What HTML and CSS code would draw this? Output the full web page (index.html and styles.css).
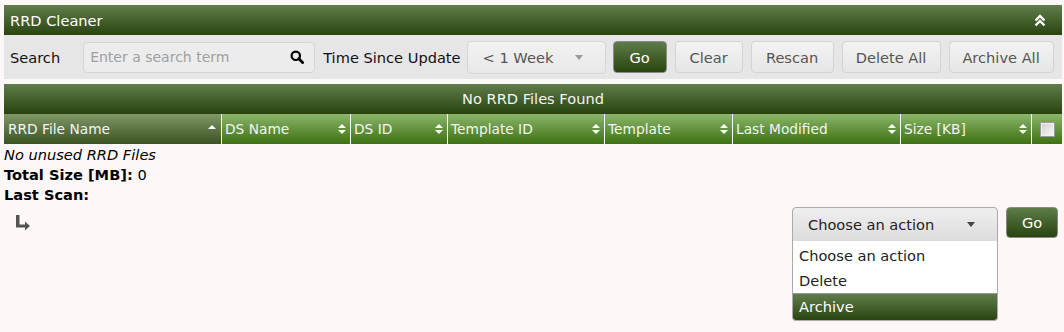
FILE: index.html
```html
<!DOCTYPE html>
<html lang="en">

<head>
  <meta charset="UTF-8">
  <title>RRD Cleaner</title>
  <link rel="stylesheet" href="styles.css">
</head>

<body>

  <div class="panel">
    <div class="panel-title">
      <span>RRD Cleaner</span>
      <svg class="collapse" width="12" height="13" viewBox="0 0 12 13">
        <path d="M1.5 6.5 L6 2 L10.5 6.5 M1.5 11.5 L6 7 L10.5 11.5" fill="none" stroke="#fff" stroke-width="2.4"/>
      </svg>
    </div>
    <div class="filter-row">
      <span class="label">Search</span>
      <div class="search-box">
        <input type="text" placeholder="Enter a search term">
        <svg width="14" height="14" viewBox="0 0 14 14">
          <circle cx="5.8" cy="5.8" r="4.2" fill="none" stroke="#000" stroke-width="2.2"/>
          <path d="M8.8 8.8 L12.6 12.6" stroke="#000" stroke-width="2.8" stroke-linecap="round"/>
        </svg>
      </div>
      <span class="label">Time Since Update</span>
      <div class="select time-select">
        <span>&lt; 1 Week</span>
        <span class="caret"></span>
      </div>
      <button class="btn btn-go">Go</button>
      <button class="btn btn-clear">Clear</button>
      <button class="btn btn-rescan">Rescan</button>
      <button class="btn btn-delete">Delete All</button>
      <button class="btn btn-archive">Archive All</button>
    </div>
  </div>

  <table class="files">
    <caption class="table-title">No RRD Files Found</caption>
    <thead>
      <tr class="columns">
        <th class="sorted col-file">RRD File Name <span class="sort sort-up"></span></th>
        <th class="col-ds">DS Name <span class="sort"></span></th>
        <th class="col-dsid">DS ID <span class="sort"></span></th>
        <th class="col-tid">Template ID <span class="sort"></span></th>
        <th class="col-tpl">Template <span class="sort"></span></th>
        <th class="col-mod">Last Modified <span class="sort"></span></th>
        <th class="col-size">Size [KB] <span class="sort"></span></th>
        <th class="col-check"><span class="checkbox"></span></th>
      </tr>
    </thead>
  </table>

  <div class="summary">
    <div class="empty">No unused RRD Files</div>
    <div><b>Total Size [MB]:</b> 0</div>
    <div><b>Last Scan:</b></div>
  </div>

  <div class="actions">
    <svg class="return-arrow" width="16" height="16" viewBox="0 0 16 16">
      <path d="M1 0 H4.5 V9.5 H10 V6.5 L15 11 L10 15.5 V12.5 H1 Z" fill="#555"/>
    </svg>
    <div class="action-group">
      <div class="action-select">
        <div class="select action-box">
          <span>Choose an action</span>
          <span class="caret dark"></span>
        </div>
        <ul class="menu">
          <li>Choose an action</li>
          <li>Delete</li>
          <li class="active">Archive</li>
        </ul>
      </div>
      <button class="btn btn-go btn-go-action">Go</button>
    </div>
  </div>

</body>

</html>
```

FILE: styles.css
```css
body {
  font-family: "DejaVu Sans", Verdana, sans-serif;
  font-size: 14.6px;
  background-color: #fdf8f7;
  margin: 0;
  padding: 5px 2px 0 4px;
  color: #000;
}

.panel {
  background-color: #e6e6e6;
}

.panel-title {
  height: 30px;
  display: flex;
  align-items: center;
  justify-content: space-between;
  padding: 0 16px 0 6px;
  color: #fff;
  background: linear-gradient(#607e4c, #2a4410);
}

.filter-row {
  height: 44px;
  display: flex;
  align-items: center;
  padding-left: 6px;
}

.label {
  color: #111;
}

.search-box {
  width: 232px;
  height: 31px;
  margin-left: 23px;
  margin-right: 8px;
  display: flex;
  align-items: center;
  justify-content: space-between;
  padding: 0 10px 0 6px;
  box-sizing: border-box;
  background: #ececec;
  border: 1px solid #d6d6d6;
  border-radius: 4px;
}

.search-box input {
  border: none;
  background: transparent;
  font-family: inherit;
  font-size: 14px;
  outline: none;
  width: 180px;
  padding: 0;
}

.search-box input::placeholder {
  color: #a0a0a0;
}

.select {
  display: flex;
  align-items: center;
  justify-content: space-between;
  box-sizing: border-box;
  border: 1px solid #d6d6d6;
  border-radius: 4px;
  color: #555;
}

.time-select {
  width: 139px;
  height: 33px;
  margin-left: 6px;
  padding: 0 22px 0 15px;
  background: linear-gradient(#f2f2f2, #e8e8e8);
}

.caret {
  width: 0;
  height: 0;
  border-left: 4.5px solid transparent;
  border-right: 4.5px solid transparent;
  border-top: 5px solid #999;
}

.caret.dark {
  border-top-color: #444;
}

.btn {
  height: 32px;
  box-sizing: border-box;
  margin-left: 8px;
  padding: 0;
  font-family: inherit;
  font-size: 14.6px;
  color: #555;
  background: linear-gradient(#f3f3f3, #e6e6e6);
  border: 1px solid #d3d3d3;
  border-radius: 4px;
}

.btn-go {
  width: 54px;
  margin-left: 7px;
  color: #fff;
  background: linear-gradient(#5d7c48, #29440f);
  border-color: #8a8a8a;
}

.btn-clear {
  width: 68px;
}

.btn-rescan {
  width: 83px;
}

.btn-delete {
  width: 99px;
}

.btn-archive {
  width: 105px;
}

.files {
  width: 1058px;
  margin-top: 5px;
  border-collapse: separate;
  border-spacing: 0;
  table-layout: fixed;
}

.table-title {
  height: 30px;
  line-height: 30px;
  text-align: center;
  color: #f4f4f4;
  background: linear-gradient(#5f7d4b, #28420e);
}

.columns th {
  position: relative;
  box-sizing: border-box;
  height: 30px;
  padding: 0 0 0 3px;
  text-align: left;
  font-size: 13.75px;
  font-weight: normal;
  color: #f4f4f4;
  border-left: 1px solid #fff;
  background: linear-gradient(#8ab66a, #3d7112);
}

.columns th.sorted {
  border-left: none;
  padding-left: 4px;
  background: linear-gradient(#809766, #3a5322);
}

.col-file { width: 217px; }
.col-ds { width: 129px; }
.col-dsid { width: 97px; }
.col-tid { width: 157px; }
.col-tpl { width: 128px; }
.col-mod { width: 168px; }
.col-size { width: 131px; }
.col-check { width: 31px; }

.sort {
  position: absolute;
  right: 4px;
  top: 10px;
  width: 0;
  height: 0;
  border-left: 4.5px solid transparent;
  border-right: 4.5px solid transparent;
  border-bottom: 4.5px solid #fff;
}

.sort::after {
  content: "";
  position: absolute;
  left: -4.5px;
  top: 6px;
  border-left: 4.5px solid transparent;
  border-right: 4.5px solid transparent;
  border-top: 4.5px solid #fff;
}

.sort-up {
  top: 11px;
  right: 5px;
}

.sort-up::after {
  display: none;
}

.checkbox {
  display: block;
  width: 13px;
  height: 13px;
  margin-left: 5px;
  border: 1px solid #9a9a9a;
  box-shadow: inset 0 0 0 1px #f0f0f0;
  background: linear-gradient(135deg, #cfcfcf, #fafafa);
}

.summary {
  line-height: 20px;
  margin-top: 1px;
}

.empty {
  font-style: italic;
}

.actions {
  display: flex;
  justify-content: space-between;
  align-items: flex-start;
  margin-top: 2px;
}

.return-arrow {
  margin: 8px 0 0 11px;
}

.action-group {
  display: flex;
  align-items: flex-start;
  margin-right: 4px;
}

.action-select {
  width: 206px;
}

.action-box {
  height: 35px;
  padding: 0 22px 0 15px;
  color: #222;
  background: linear-gradient(#efefef, #dcdcdc);
  border-color: #aaa;
  border-radius: 4px 4px 0 0;
}

.menu {
  box-sizing: border-box;
  margin: -1px 0 0;
  padding: 2px 0 0;
  list-style: none;
  color: #222;
  background: #fff;
  border: 1px solid #aaa;
  border-top: none;
  border-radius: 0 0 4px 4px;
  overflow: hidden;
}

.menu li {
  height: 25px;
  line-height: 25px;
  padding-left: 6px;
}

.menu li.active {
  color: #fff;
  height: 26px;
  border-top: 1px solid #999;
  background: linear-gradient(#5f7d4b, #2a4410);
}

.btn-go-action {
  width: 52px;
  height: 31px;
  margin-left: 8px;
}
```
